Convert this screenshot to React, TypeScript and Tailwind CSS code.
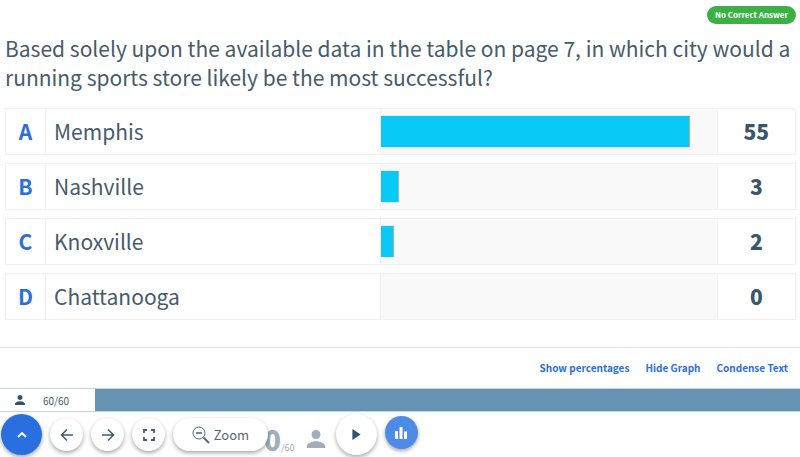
import React from "react";
import clsx from "clsx";

interface Answer {
  letter: string;
  label: string;
  count: number;
}

const answers: Answer[] = [
  { letter: "A", label: "Memphis", count: 55 },
  { letter: "B", label: "Nashville", count: 3 },
  { letter: "C", label: "Knoxville", count: 2 },
  { letter: "D", label: "Chattanooga", count: 0 },
];

const total = 60;

const PersonIcon = ({ className }: { className?: string }) => (
  <svg viewBox="4 4 16 16" fill="currentColor" className={className} aria-hidden>
    <path d="M12 12c2.21 0 4-1.79 4-4s-1.79-4-4-4-4 1.79-4 4 1.79 4 4 4zm0 2c-2.67 0-8 1.34-8 4v2h16v-2c0-2.66-5.33-4-8-4z" />
  </svg>
);

const AnswerRow = ({ letter, label, count }: Answer) => (
  <tr className="h-[47px]">
    <th
      scope="row"
      className="border border-[#f0f0f0] text-center font-bold text-[#2a6fdf]"
    >
      {letter}
    </th>
    <td className="border-y border-r border-[#f0f0f0] pl-2">{label}</td>
    <td className="border-y border-r border-[#f0f0f0] bg-[#f9f9f9]">
      {count > 0 && (
        <div
          className="h-[31px] bg-[#09c9f7] shadow-[1px_0_1px_#b0b0b0]"
          style={{ width: `${(count / total) * 100}%` }}
        />
      )}
    </td>
    <td className="border-y border-r border-[#f0f0f0] text-center font-black text-[#3a566b]">
      {count}
    </td>
  </tr>
);

interface RoundButtonProps {
  label: string;
  className?: string;
  children: React.ReactNode;
}

const RoundButton = ({ label, className, children }: RoundButtonProps) => (
  <button
    type="button"
    aria-label={label}
    className={clsx(
      "flex shrink-0 items-center justify-center rounded-full shadow-[0_2px_4px_rgba(0,0,0,0.35)]",
      className
    )}
  >
    {children}
  </button>
);

const App = () => {
  return (
    <div className="flex min-h-screen flex-col overflow-hidden bg-white font-['Noto_Sans_CJK_SC',sans-serif] text-[#465b6b]">
      <header className="flex justify-end px-1 pt-[6px]">
        <span className="rounded-full bg-[#3bb143] px-2 text-[8px] leading-[18px] font-bold text-white">
          No Correct Answer
        </span>
      </header>

      <main className="pt-[10px] pr-1 pl-[5px]">
        <h1 className="text-[21px] leading-[29px]">
          Based solely upon the available data in the table on page 7, in which
          city would a running sports store likely be the most successful?
        </h1>

        <table className="mt-2 w-full table-fixed border-separate border-spacing-x-0 border-spacing-y-2 text-[21px] leading-[29px]">
          <colgroup>
            <col className="w-[41px]" />
            <col className="w-[42.4%]" />
            <col className="w-[42.5%]" />
            <col />
          </colgroup>
          <tbody>
            {answers.map((answer) => (
              <AnswerRow key={answer.letter} {...answer} />
            ))}
          </tbody>
        </table>
      </main>

      <nav className="mt-[19px] flex h-[41px] items-center justify-end gap-4 border-t border-[#e6e6e6] px-3 pb-px text-[10px] font-bold text-[#2a6fdf]">
        <button type="button">Show percentages</button>
        <button type="button">Hide Graph</button>
        <button type="button">Condense Text</button>
      </nav>

      <div className="flex h-6 border-y border-[#c9d3da] bg-[#6593b2]">
        <div className="flex w-[95px] items-center bg-white pl-[15px] text-[10px]">
          <PersonIcon className="mr-[18px] size-[10px] text-[#34536a]" />
          60/60
        </div>
      </div>

      <footer className="flex h-[45px] items-center gap-2">
        <RoundButton label="Collapse" className="ml-px size-[41px] bg-[#2a6fdf] text-white">
          <svg viewBox="0 0 12 12" className="size-3" fill="none" stroke="currentColor" strokeWidth="1.9" aria-hidden>
            <path d="M2 8l4-4 4 4" />
          </svg>
        </RoundButton>
        <RoundButton label="Previous" className="size-[33px] bg-white text-[#415c70]">
          <svg viewBox="0 0 14 14" className="size-[14px]" fill="none" stroke="currentColor" strokeWidth="1.6" aria-hidden>
            <path d="M13 7H2M7 1.5L1.5 7 7 12.5" />
          </svg>
        </RoundButton>
        <RoundButton label="Next" className="size-[33px] bg-white text-[#415c70]">
          <svg viewBox="0 0 14 14" className="size-[14px]" fill="none" stroke="currentColor" strokeWidth="1.6" aria-hidden>
            <path d="M1 7h11M7 1.5L12.5 7 7 12.5" />
          </svg>
        </RoundButton>
        <RoundButton label="Full screen" className="size-[33px] bg-white text-[#415c70]">
          <svg viewBox="0 0 12 12" className="size-3" fill="none" stroke="currentColor" strokeWidth="1.8" aria-hidden>
            <path d="M1 4V1h3M8 1h3v3M11 8v3H8M4 11H1V8" />
          </svg>
        </RoundButton>
        <RoundButton
          label="Zoom"
          className="z-10 h-[33px] w-[95px] gap-1 bg-white text-[13px] text-[#536878]"
        >
          <svg viewBox="0 0 18 18" className="size-[18px]" fill="none" stroke="currentColor" aria-hidden>
            <circle cx="7" cy="7" r="6" strokeWidth="1" />
            <path d="M4 7h6" strokeWidth="1.6" />
            <path d="M11.5 11.5l5.5 5.5" strokeWidth="2" />
          </svg>
          Zoom
        </RoundButton>

        <div className="-ml-3 flex items-center gap-3 pt-2 text-[#a0afba]">
          <div className="flex items-baseline">
            <span className="text-[28px] leading-8 font-black">0</span>
            <span className="text-[9px]">/60</span>
          </div>
          <PersonIcon className="size-[18px]" />
        </div>
        <RoundButton label="Play" className="ml-[3px] size-[41px] bg-white text-[#34536a]">
          <svg viewBox="0 0 9 12" className="h-[11px] w-[9px]" fill="currentColor" aria-hidden>
            <path d="M0 0l9 6-9 6z" />
          </svg>
        </RoundButton>
        <RoundButton label="Results" className="mb-1 size-[33px] bg-[#4d8be6] text-white">
          <svg viewBox="0 0 14 14" className="size-[14px]" fill="currentColor" aria-hidden>
            <path d="M1 5h3v8H1zM5.500 1h3v12h-3zM10 5.500h3V13h-3z" />
          </svg>
        </RoundButton>
      </footer>
    </div>
  );
};

export default App;
